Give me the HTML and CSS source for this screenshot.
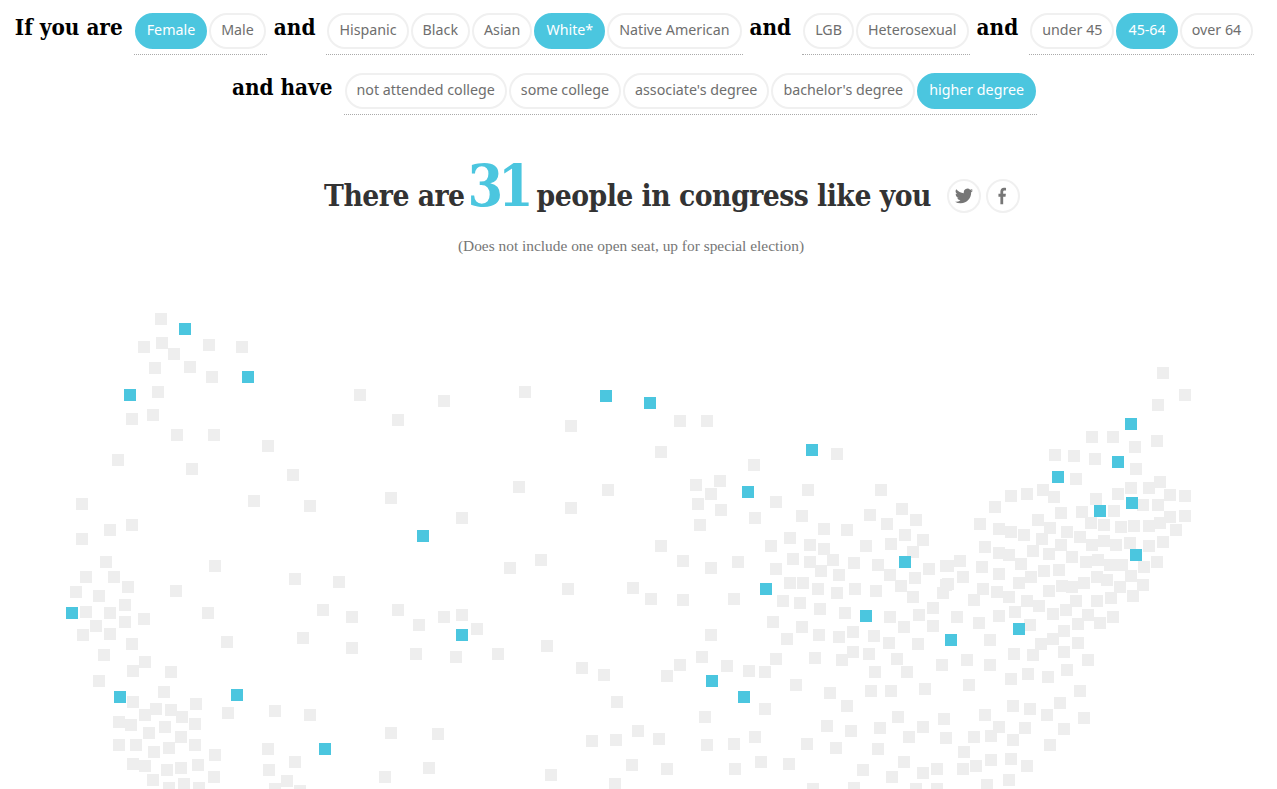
FILE: index.html
```html
<!DOCTYPE html>
<html lang="en">
<head>
<meta charset="utf-8">
<title>People in congress like you</title>
<link rel="stylesheet" href="styles.css">
</head>
<body>
<main class="page">
  <form class="filters">
    <div class="row">
      <span class="label">If you are</span>
      <div class="group"><button type="button" class="chip on">Female</button><button type="button" class="chip">Male</button></div>
      <span class="label">and</span>
      <div class="group"><button type="button" class="chip">Hispanic</button><button type="button" class="chip">Black</button><button type="button" class="chip">Asian</button><button type="button" class="chip on">White*</button><button type="button" class="chip">Native American</button></div>
      <span class="label">and</span>
      <div class="group"><button type="button" class="chip">LGB</button><button type="button" class="chip">Heterosexual</button></div>
      <span class="label">and</span>
      <div class="group"><button type="button" class="chip">under 45</button><button type="button" class="chip on">45-64</button><button type="button" class="chip">over 64</button></div>
    </div>
    <div class="row">
      <span class="label">and have</span>
      <div class="group"><button type="button" class="chip">not attended college</button><button type="button" class="chip">some college</button><button type="button" class="chip">associate's degree</button><button type="button" class="chip">bachelor's degree</button><button type="button" class="chip on">higher degree</button></div>
    </div>
  </form>
  <section class="result">
    <div class="headline">
      <h1 class="title">There are <span class="count">31</span> people in congress like you</h1>
      <div class="shares">
        <a class="share" href="#" aria-label="Twitter"><svg viewBox="0 0 24 24" class="share-icon tw"><path d="M23.95 4.57a10 10 0 0 1-2.82.77 4.96 4.96 0 0 0 2.16-2.72c-.95.55-2 .95-3.12 1.18a4.92 4.92 0 0 0-8.38 4.48A13.98 13.98 0 0 1 1.64 3.16a4.92 4.92 0 0 0 1.52 6.57 4.9 4.9 0 0 1-2.23-.62v.06a4.92 4.92 0 0 0 3.95 4.83 4.9 4.9 0 0 1-2.22.08 4.93 4.93 0 0 0 4.6 3.42A9.87 9.87 0 0 1 0 19.54a13.94 13.94 0 0 0 7.55 2.21c9.05 0 14-7.5 14-13.98 0-.21 0-.42-.02-.63a10 10 0 0 0 2.42-2.57z"/></svg></a>
        <a class="share" href="#" aria-label="Facebook"><svg viewBox="0 0 12 24" class="share-icon fb"><path d="M3.2 23V12.9H.6V9h2.6V6.1C3.2 2.8 5 1 7.9 1c1.3 0 2.4.1 2.8.2v3.500H8.800c-1.500 0-1.900.8-1.900 1.900V9h3.600l-.5 3.900H6.900V23z"/></svg></a>
      </div>
    </div>
    <p class="note">(Does not include one open seat, up for special election)</p>
  </section>
  <svg class="map" viewBox="0 300 1277 489" role="img" aria-label="Map of congressional districts">
    <g transform="translate(-6 -6)">
      <g class="seats">
<rect x="161" y="319"/><rect x="144" y="347"/><rect x="162" y="343"/><rect x="209" y="345"/><rect x="242" y="347"/><rect x="174" y="354"/><rect x="155" y="368"/><rect x="190" y="367"/><rect x="212" y="377"/><rect x="158" y="392"/><rect x="360" y="395"/><rect x="153" y="415"/><rect x="132" y="419"/><rect x="177" y="435"/><rect x="214" y="435"/><rect x="268" y="446"/><rect x="118" y="460"/><rect x="192" y="469"/><rect x="293" y="475"/><rect x="254" y="501"/><rect x="82" y="504"/><rect x="310" y="506"/><rect x="132" y="525"/><rect x="110" y="530"/><rect x="82" y="539"/>
<rect x="106" y="562"/><rect x="215" y="566"/><rect x="86" y="577"/><rect x="114" y="577"/><rect x="295" y="579"/><rect x="339" y="582"/><rect x="128" y="587"/><rect x="176" y="591"/><rect x="76" y="592"/><rect x="99" y="596"/><rect x="125" y="605"/><rect x="86" y="612"/><rect x="110" y="613"/><rect x="208" y="613"/><rect x="323" y="610"/><rect x="352" y="617"/><rect x="125" y="622"/><rect x="144" y="619"/><rect x="96" y="626"/><rect x="110" y="634"/><rect x="83" y="635"/><rect x="132" y="644"/><rect x="227" y="642"/><rect x="303" y="638"/><rect x="352" y="648"/><rect x="104" y="655"/><rect x="145" y="662"/><rect x="133" y="671"/><rect x="171" y="672"/><rect x="99" y="681"/><rect x="164" y="692"/><rect x="133" y="702"/><rect x="196" y="704"/><rect x="156" y="709"/><rect x="171" y="710"/><rect x="145" y="715"/><rect x="182" y="717"/><rect x="228" y="713"/><rect x="275" y="711"/><rect x="310" y="715"/><rect x="119" y="722"/><rect x="131" y="725"/><rect x="195" y="724"/><rect x="165" y="727"/><rect x="149" y="733"/><rect x="181" y="737"/><rect x="119" y="745"/><rect x="136" y="745"/><rect x="195" y="745"/><rect x="169" y="748"/><rect x="154" y="752"/><rect x="268" y="749"/><rect x="215" y="755"/><rect x="295" y="762"/><rect x="133" y="764"/><rect x="145" y="766"/><rect x="167" y="770"/><rect x="181" y="768"/><rect x="198" y="765"/><rect x="269" y="770"/><rect x="214" y="777"/><rect x="287" y="781"/><rect x="153" y="780"/><rect x="184" y="784"/><rect x="169" y="788"/><rect x="199" y="788"/><rect x="275" y="789"/><rect x="300" y="791"/>
<rect x="525" y="392"/><rect x="444" y="401"/><rect x="398" y="420"/><rect x="571" y="426"/><rect x="680" y="421"/><rect x="707" y="421"/><rect x="661" y="452"/><rect x="519" y="487"/><rect x="608" y="490"/><rect x="391" y="498"/><rect x="571" y="508"/><rect x="462" y="518"/><rect x="661" y="546"/><rect x="683" y="561"/><rect x="541" y="560"/><rect x="510" y="568"/><rect x="568" y="589"/><rect x="633" y="588"/>
<rect x="398" y="610"/><rect x="651" y="599"/><rect x="683" y="600"/><rect x="444" y="617"/><rect x="462" y="615"/><rect x="419" y="625"/><rect x="477" y="629"/><rect x="547" y="646"/><rect x="416" y="654"/><rect x="456" y="657"/><rect x="498" y="654"/><rect x="582" y="668"/><rect x="604" y="675"/><rect x="680" y="665"/><rect x="667" y="676"/><rect x="617" y="702"/><rect x="391" y="733"/><rect x="438" y="734"/><rect x="638" y="731"/><rect x="592" y="741"/><rect x="616" y="740"/><rect x="659" y="739"/><rect x="632" y="765"/><rect x="667" y="769"/><rect x="429" y="768"/><rect x="385" y="777"/><rect x="551" y="775"/><rect x="615" y="784"/>
<rect x="837" y="454"/><rect x="754" y="465"/><rect x="720" y="481"/><rect x="696" y="485"/><rect x="711" y="494"/><rect x="808" y="490"/><rect x="881" y="490"/><rect x="698" y="504"/><rect x="776" y="502"/><rect x="721" y="510"/><rect x="902" y="509"/><rect x="802" y="516"/><rect x="870" y="515"/><rect x="755" y="518"/><rect x="916" y="520"/><rect x="700" y="525"/><rect x="887" y="524"/><rect x="824" y="529"/><rect x="847" y="530"/><rect x="790" y="538"/><rect x="905" y="535"/><rect x="923" y="540"/><rect x="771" y="546"/><rect x="810" y="545"/><rect x="866" y="546"/><rect x="891" y="544"/><rect x="824" y="549"/><rect x="913" y="552"/><rect x="793" y="559"/><rect x="810" y="562"/><rect x="833" y="560"/><rect x="854" y="563"/><rect x="738" y="562"/><rect x="878" y="565"/><rect x="711" y="568"/><rect x="776" y="569"/><rect x="821" y="571"/><rect x="839" y="575"/><rect x="890" y="575"/><rect x="929" y="569"/><rect x="946" y="566"/><rect x="915" y="578"/><rect x="790" y="583"/><rect x="803" y="583"/><rect x="901" y="586"/><rect x="818" y="589"/><rect x="855" y="589"/><rect x="876" y="591"/><rect x="837" y="593"/><rect x="946" y="585"/><rect x="943" y="593"/><rect x="913" y="597"/><rect x="734" y="599"/><rect x="783" y="601"/><rect x="800" y="603"/><rect x="933" y="608"/><rect x="820" y="609"/><rect x="845" y="613"/><rect x="890" y="617"/><rect x="919" y="615"/>
<rect x="773" y="622"/><rect x="802" y="627"/><rect x="904" y="627"/><rect x="933" y="626"/><rect x="711" y="635"/><rect x="819" y="635"/><rect x="853" y="632"/><rect x="839" y="637"/><rect x="874" y="636"/><rect x="787" y="639"/><rect x="889" y="643"/><rect x="918" y="644"/><rect x="853" y="652"/><rect x="869" y="654"/><rect x="776" y="659"/><rect x="815" y="658"/><rect x="842" y="660"/><rect x="897" y="659"/><rect x="942" y="665"/><rect x="702" y="657"/><rect x="727" y="666"/><rect x="875" y="672"/><rect x="907" y="672"/><rect x="749" y="671"/><rect x="765" y="672"/><rect x="796" y="685"/><rect x="830" y="693"/><rect x="871" y="691"/><rect x="891" y="691"/><rect x="925" y="689"/><rect x="765" y="709"/><rect x="847" y="706"/><rect x="705" y="717"/><rect x="898" y="717"/><rect x="944" y="719"/><rect x="827" y="726"/><rect x="851" y="731"/><rect x="880" y="728"/><rect x="923" y="727"/><rect x="755" y="737"/><rect x="909" y="737"/><rect x="946" y="738"/><rect x="707" y="745"/><rect x="734" y="744"/><rect x="807" y="744"/><rect x="836" y="748"/><rect x="878" y="749"/><rect x="904" y="762"/><rect x="761" y="762"/><rect x="789" y="764"/><rect x="735" y="769"/><rect x="863" y="770"/><rect x="937" y="769"/><rect x="923" y="773"/><rect x="892" y="777"/><rect x="813" y="789"/><rect x="854" y="788"/><rect x="916" y="789"/><rect x="937" y="789"/>
<rect x="1163" y="373"/><rect x="1185" y="395"/><rect x="1158" y="405"/><rect x="1092" y="437"/><rect x="1113" y="437"/><rect x="1157" y="441"/><rect x="1135" y="447"/><rect x="1055" y="455"/><rect x="1074" y="456"/><rect x="1095" y="459"/><rect x="1136" y="469"/><rect x="1076" y="479"/><rect x="1131" y="488"/><rect x="1160" y="482"/><rect x="1149" y="488"/><rect x="1043" y="490"/><rect x="1027" y="494"/><rect x="1011" y="496"/><rect x="1054" y="497"/><rect x="1118" y="494"/><rect x="1096" y="499"/><rect x="1170" y="495"/><rect x="1185" y="496"/><rect x="1143" y="505"/><rect x="1158" y="505"/><rect x="995" y="507"/><rect x="1114" y="511"/><rect x="1082" y="512"/><rect x="1061" y="513"/>
<rect x="1170" y="517"/><rect x="1185" y="516"/><rect x="1038" y="520"/><rect x="980" y="524"/><rect x="1091" y="523"/><rect x="1104" y="525"/><rect x="1050" y="528"/><rect x="1160" y="523"/><rect x="1149" y="526"/><rect x="1134" y="526"/><rect x="1121" y="527"/><rect x="1176" y="530"/><rect x="999" y="529"/><rect x="1011" y="532"/><rect x="1067" y="532"/><rect x="1024" y="535"/><rect x="1080" y="537"/><rect x="1042" y="539"/><rect x="1163" y="542"/><rect x="1104" y="541"/><rect x="1130" y="543"/><rect x="1116" y="545"/><rect x="1149" y="546"/><rect x="1092" y="545"/><rect x="1061" y="545"/><rect x="985" y="547"/><rect x="1033" y="551"/><rect x="999" y="553"/><rect x="1009" y="555"/><rect x="1049" y="554"/><rect x="1072" y="557"/><rect x="1086" y="562"/><rect x="1098" y="560"/><rect x="1157" y="562"/><rect x="1144" y="567"/><rect x="1021" y="564"/><rect x="1110" y="565"/><rect x="1122" y="565"/><rect x="960" y="561"/><rect x="948" y="566"/><rect x="982" y="567"/><rect x="1044" y="571"/><rect x="1059" y="570"/><rect x="999" y="574"/><rect x="1031" y="577"/><rect x="1131" y="576"/><rect x="963" y="577"/><rect x="1097" y="577"/><rect x="1107" y="580"/><rect x="1084" y="583"/><rect x="1019" y="583"/><rect x="1062" y="586"/><rect x="1072" y="587"/><rect x="1143" y="585"/><rect x="1120" y="587"/><rect x="948" y="584"/><rect x="983" y="589"/><rect x="1049" y="591"/><rect x="997" y="592"/><rect x="1133" y="596"/><rect x="1009" y="597"/><rect x="974" y="600"/><rect x="1111" y="598"/><rect x="1097" y="601"/><rect x="1076" y="601"/><rect x="1027" y="601"/><rect x="1039" y="606"/><rect x="1066" y="610"/><rect x="1015" y="612"/><rect x="1053" y="614"/><rect x="1088" y="615"/><rect x="1113" y="617"/><rect x="957" y="617"/><rect x="999" y="616"/><rect x="979" y="623"/><rect x="1100" y="623"/><rect x="1078" y="624"/><rect x="1030" y="625"/><rect x="1064" y="631"/><rect x="1053" y="639"/><rect x="990" y="640"/><rect x="1078" y="643"/><rect x="1041" y="644"/>
<rect x="1014" y="654"/><rect x="1033" y="655"/><rect x="1064" y="652"/><rect x="1088" y="660"/><rect x="967" y="660"/><rect x="990" y="665"/><rect x="1067" y="670"/><rect x="1028" y="674"/><rect x="1011" y="679"/><rect x="1048" y="677"/><rect x="969" y="685"/><rect x="1080" y="691"/><rect x="1060" y="703"/><rect x="1013" y="706"/><rect x="1030" y="709"/><rect x="985" y="715"/><rect x="1047" y="715"/><rect x="1084" y="718"/><rect x="999" y="727"/><rect x="1025" y="728"/><rect x="1064" y="729"/><rect x="991" y="736"/><rect x="974" y="737"/><rect x="1013" y="740"/><rect x="1050" y="745"/><rect x="964" y="752"/><rect x="991" y="760"/><rect x="1011" y="759"/><rect x="1027" y="766"/><rect x="976" y="766"/><rect x="963" y="769"/><rect x="1009" y="780"/><rect x="987" y="785"/>
      </g>
      <g class="seats match">
<rect x="185" y="329"/><rect x="248" y="377"/><rect x="130" y="395"/><rect x="72" y="613"/><rect x="120" y="697"/><rect x="237" y="695"/><rect x="325" y="749"/><rect x="606" y="396"/><rect x="650" y="403"/><rect x="423" y="536"/><rect x="462" y="635"/><rect x="812" y="450"/><rect x="748" y="492"/><rect x="905" y="562"/><rect x="766" y="589"/><rect x="866" y="616"/><rect x="951" y="640"/><rect x="712" y="681"/><rect x="744" y="697"/><rect x="1131" y="424"/><rect x="1118" y="462"/><rect x="1058" y="477"/><rect x="1132" y="503"/><rect x="1100" y="511"/><rect x="1136" y="555"/><rect x="1019" y="629"/>
      </g>
    </g>
  </svg>
</main>
</body>
</html>
```

FILE: styles.css
```css
* { box-sizing: border-box; }
html, body { margin: 0; background: #fff; overflow: hidden; height: 789px; }
.page { width: 1262px; }
.filters { display: flex; flex-direction: column; gap: 3px; padding-top: 12px; }
.row { display: flex; justify-content: center; align-items: flex-start; height: 57px; }
.label { font: bold 22.3px/30px "DejaVu Serif Condensed", "Liberation Serif", serif; color: #000; margin: 0 11px 0 7px; white-space: nowrap; }
.group { display: flex; gap: 2px; padding: 1px 1px 5px; border-bottom: 1px dotted #aaa; }
.chip { height: 36px; padding: 0 10px 3px; border: 2px solid #f0f0f0; border-radius: 18px; background: #fff; color: #6e6e6e; font: 14.25px/29px "Noto Sans", sans-serif; white-space: nowrap; }
.chip.on { background: #4bc6df; border-color: #4bc6df; color: #fff; }
.result { display: flex; flex-direction: column; align-items: center; margin-top: 26px; }
.headline { display: flex; align-items: center; height: 80px; margin-left: 82px; }
.title { margin: 2px 0 0; font: bold 29.7px/80px "DejaVu Serif Condensed", "Liberation Serif", serif; color: #333; white-space: nowrap; letter-spacing: -.5px; }
.count { font-size: 57px; color: #4bc6df; line-height: 1; letter-spacing: -5px; margin: 0 -1px 0 -6px; }
.shares { display: flex; gap: 5px; margin: 2px 0 0 16px; }
.share { width: 34px; height: 34px; border: 2px solid #f0f0f0; border-radius: 50%; display: flex; align-items: center; justify-content: center; }
.share-icon { fill: #767676; display: block; }
.tw { width: 18px; height: 18px; }
.fb { width: 9px; height: 18px; }
.note { margin: 1px 0 0; font: 15.4px/20px "Liberation Serif", serif; color: #767676; }
.map { display: block; width: 1277px; height: 489px; position: absolute; left: 0; top: 300px; }
.seats rect { width: 12px; height: 12px; fill: #eee; }
.seats.match rect { fill: #4bc6df; }
```
